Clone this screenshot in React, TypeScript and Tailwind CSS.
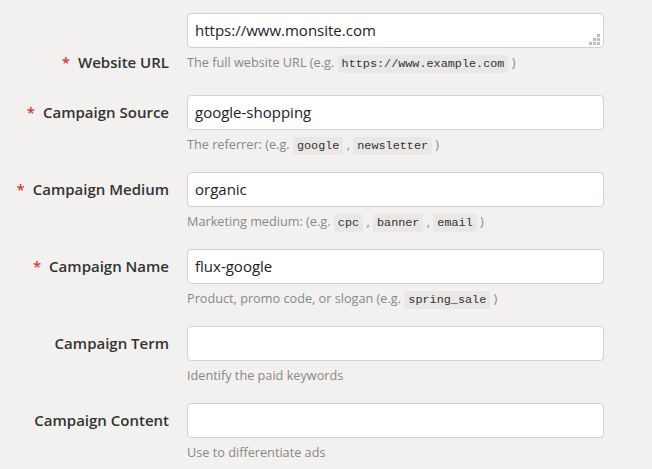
import React from 'react';

type Field = {
	label: string;
	required?: boolean;
	value: string;
	help: React.ReactNode;
	multiline?: boolean;
};

const Code = ({ children }: { children: React.ReactNode }) => (
	<code className="bg-[#e9e8e7] text-[#333] rounded-[3px] px-[4px] py-[2px] text-[11.8px] leading-[14px] font-['Liberation_Mono','Courier_New',monospace]">
		{children}
	</code>
);

const fields: Field[] = [
	{
		label: 'Website URL',
		required: true,
		value: 'https://www.monsite.com',
		multiline: true,
		help: <>The full website URL (e.g. <Code>https://www.example.com</Code> )</>,
	},
	{
		label: 'Campaign Source',
		required: true,
		value: 'google-shopping',
		help: <>The referrer: (e.g. <Code>google</Code> , <Code>newsletter</Code> )</>,
	},
	{
		label: 'Campaign Medium',
		required: true,
		value: 'organic',
		help: <>Marketing medium: (e.g. <Code>cpc</Code> , <Code>banner</Code> , <Code>email</Code> )</>,
	},
	{
		label: 'Campaign Name',
		required: true,
		value: 'flux-google',
		help: <>Product, promo code, or slogan (e.g. <Code>spring_sale</Code> )</>,
	},
	{ label: 'Campaign Term', value: '', help: 'Identify the paid keywords' },
	{ label: 'Campaign Content', value: '', help: 'Use to differentiate ads' },
];

function ResizeHandle() {
	// little dotted grip in the corner of the textarea
	const dots = [
		[8, 0],
		[4, 4], [8, 4],
		[0, 8], [4, 8], [8, 8],
	];
	return (
		<svg className="absolute right-[3px] bottom-[2px]" width="11" height="11" viewBox="0 0 11 11">
			{dots.map(([x, y], i) => (
				<rect key={i} x={x} y={y} width="3" height="3" fill="#bdbdbd" />
			))}
		</svg>
	);
}

export default function App() {
	return (
		<div className="w-[652px] h-[469px] overflow-hidden bg-[#f2f1f0] font-['Open_Sans',sans-serif] pt-[13px]">
			{fields.map((f, i) => (
				<div key={f.label} className={`flex ${i === 0 ? 'mb-[23px]' : 'mb-[19px]'}`}>
					<div className={`w-[169px] shrink-0 flex justify-end items-start ${f.multiline ? 'pt-[39px]' : 'pt-[7px]'}`}>
						<label className="text-[15px] leading-[20px] font-semibold text-[#333]">
							{f.required && <span className="text-[#d9353c] mr-[8px]">*</span>}
							{f.label}
						</label>
					</div>
					<div className="ml-[18px] w-[417px]">
						<div className="relative h-[35px] bg-white border border-[#d2d0ce] rounded-[4px] pl-[7px] pr-[8px] flex items-center text-[15px] text-[#222]">
							{f.value}
							{f.multiline && <ResizeHandle />}
						</div>
						<div className="mt-[5px] h-[18px] text-[12.7px] leading-[18px] text-[#8a8886] whitespace-nowrap">{f.help}</div>
					</div>
				</div>
			))}
		</div>
	);
}
